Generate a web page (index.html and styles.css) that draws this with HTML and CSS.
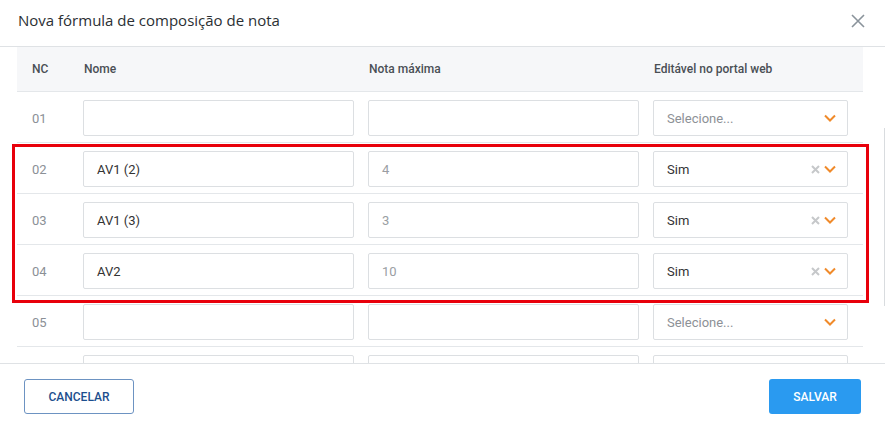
FILE: index.html
```html
<!DOCTYPE html>
<html lang="pt-BR">
<head>
<meta charset="UTF-8">
<title>Nova fórmula de composição de nota</title>
<link rel="stylesheet" href="styles.css">
</head>
<body>
  <div class="modal">
    <div class="modal-header">
      <h1 class="modal-title">Nova fórmula de composição de nota</h1>
      <span class="close">
        <svg width="14" height="14" viewBox="0 0 14 14"><path d="M1 1 L13 13 M13 1 L1 13" stroke="#8a939b" stroke-width="1.6" fill="none"/></svg>
      </span>
    </div>

    <div class="modal-body">
      <div class="grid-row head">
        <div class="nc">NC</div>
        <div>Nome</div>
        <div>Nota máxima</div>
        <div>Editável no portal web</div>
      </div>

      <div class="grid-row">
        <div class="nc">01</div>
        <div class="field"></div>
        <div class="field"></div>
        <div class="field select"><span class="placeholder">Selecione...</span><svg class="arrow" width="12" height="8" viewBox="0 0 12 8"><path d="M1 1.5 L6 6.5 L11 1.5" stroke="#f08a2a" stroke-width="2" fill="none"/></svg></div>
      </div>
      <div class="grid-row">
        <div class="nc">02</div>
        <div class="field">AV1 (2)</div>
        <div class="field muted">4</div>
        <div class="field select"><span>Sim</span><svg class="clear" width="9" height="9" viewBox="0 0 9 9"><path d="M1 1 L8 8 M8 1 L1 8" stroke="#c6c8ca" stroke-width="2" fill="none"/></svg><svg class="arrow" width="12" height="8" viewBox="0 0 12 8"><path d="M1 1.5 L6 6.5 L11 1.5" stroke="#f08a2a" stroke-width="2" fill="none"/></svg></div>
      </div>
      <div class="grid-row">
        <div class="nc">03</div>
        <div class="field">AV1 (3)</div>
        <div class="field muted">3</div>
        <div class="field select"><span>Sim</span><svg class="clear" width="9" height="9" viewBox="0 0 9 9"><path d="M1 1 L8 8 M8 1 L1 8" stroke="#c6c8ca" stroke-width="2" fill="none"/></svg><svg class="arrow" width="12" height="8" viewBox="0 0 12 8"><path d="M1 1.5 L6 6.5 L11 1.5" stroke="#f08a2a" stroke-width="2" fill="none"/></svg></div>
      </div>
      <div class="grid-row">
        <div class="nc">04</div>
        <div class="field">AV2</div>
        <div class="field muted">10</div>
        <div class="field select"><span>Sim</span><svg class="clear" width="9" height="9" viewBox="0 0 9 9"><path d="M1 1 L8 8 M8 1 L1 8" stroke="#c6c8ca" stroke-width="2" fill="none"/></svg><svg class="arrow" width="12" height="8" viewBox="0 0 12 8"><path d="M1 1.5 L6 6.5 L11 1.5" stroke="#f08a2a" stroke-width="2" fill="none"/></svg></div>
      </div>
      <div class="grid-row">
        <div class="nc">05</div>
        <div class="field"></div>
        <div class="field"></div>
        <div class="field select"><span class="placeholder">Selecione...</span><svg class="arrow" width="12" height="8" viewBox="0 0 12 8"><path d="M1 1.5 L6 6.5 L11 1.5" stroke="#f08a2a" stroke-width="2" fill="none"/></svg></div>
      </div>
      <div class="grid-row">
        <div class="nc"></div>
        <div class="field"></div>
        <div class="field"></div>
        <div class="field select"></div>
      </div>

      <div class="highlight"></div>
      <div class="scroll-thumb"></div>
    </div>

    <div class="modal-footer">
      <button class="btn btn-outline">CANCELAR</button>
      <button class="btn btn-primary">SALVAR</button>
    </div>
  </div>
</body>
</html>
```

FILE: styles.css
```css
  body {
    margin: 0;
    background: #fff;
    font-family: Roboto, "Liberation Sans", sans-serif;
    color: #333;
    overflow: hidden;
  }

  .modal {
    width: 885px;
    height: 429px;
    display: flex;
    flex-direction: column;
    position: relative;
  }

  .modal-header {
    height: 47px;
    border-bottom: 1px solid #dfe2e5;
    display: flex;
    align-items: center;
    justify-content: space-between;
    padding: 0 20px 6px 18px;
    box-sizing: border-box;
    flex-shrink: 0;
  }

  .modal-title {
    margin: 0;
    font-family: "Open Sans", sans-serif;
    font-size: 15px;
    font-weight: 400;
    color: #2b2f33;
  }

  .close {
    display: flex;
    margin-top: 1px;
  }

  .modal-body {
    height: 316px;
    overflow: hidden;
    padding: 0 22px 0 17px;
    position: relative;
    flex-shrink: 0;
  }

  .grid-row {
    display: grid;
    grid-template-columns: 52px 271px 271px 195px;
    column-gap: 14px;
    align-items: center;
    padding: 8px 15px 6px 0;
    border-bottom: 1px solid #e4e7ea;
  }

  .grid-row.head {
    height: 45px;
    padding: 0 15px 0 0;
    background: #f6f7f9;
    font-size: 12px;
    font-weight: 500;
    color: #4a4f55;
    box-sizing: border-box;
  }

  .grid-row.head div {
    padding-left: 1px;
  }

  .grid-row.head .nc {
    padding-left: 15px;
    font-size: 12px;
    color: #4a4f55;
  }

  .nc {
    padding-left: 15px;
    font-size: 13px;
    color: #8b9096;
  }

  .field {
    height: 36px;
    box-sizing: border-box;
    border: 1px solid #dcdfe2;
    border-radius: 2px;
    display: flex;
    align-items: center;
    padding: 0 11px 0 13px;
    font-size: 13px;
    color: #333;
  }

  .field.muted {
    color: #9a9ea3;
  }

  .select span:first-child {
    flex: 1;
  }

  .placeholder {
    color: #8d9196;
  }

  .clear {
    margin-right: 4px;
  }

  .arrow {
    display: block;
  }

  .highlight {
    position: absolute;
    left: 12px;
    top: 97px;
    width: 851px;
    height: 153px;
    border: 3px solid #e8000b;
  }

  .scroll-thumb {
    position: absolute;
    right: 0;
    top: 81px;
    width: 1px;
    height: 178px;
    background: #d9dcdf;
  }

  .modal-footer {
    flex: 1;
    border-top: 1px solid #dfe2e5;
    display: flex;
    align-items: center;
    justify-content: space-between;
    padding: 0 24px 0 24px;
  }

  .btn {
    height: 35px;
    font-family: Roboto, sans-serif;
    font-size: 12px;
    font-weight: 500;
    border-radius: 3px;
    cursor: pointer;
  }

  .btn-outline {
    width: 110px;
    background: #fff;
    border: 1px solid #6d93c2;
    color: #1d4f8e;
  }

  .btn-primary {
    width: 92px;
    background: #2a9af0;
    border: none;
    color: #fff;
  }
```
